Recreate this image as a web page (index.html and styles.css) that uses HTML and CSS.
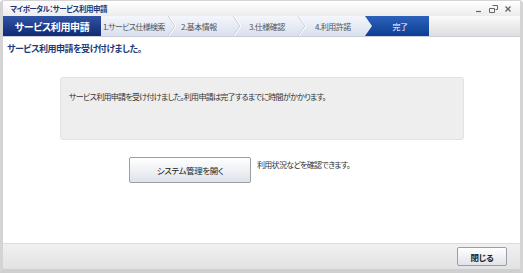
FILE: index.html
```html
<!DOCTYPE html>
<html lang="ja">
<head>
  <meta charset="utf-8">
  <title>マイポータル：サービス利用申請</title>
  <link rel="stylesheet" href="styles.css">
</head>
<body>
  <div class="window">
    <div class="titlebar">
      <span class="title">マイポータル：サービス利用申請</span>
      <div class="winbtns">
        <svg width="8" height="8" viewBox="0 0 8 8"><path d="M1 6.5h5" stroke="#666" stroke-width="1.2"/></svg>
        <svg width="9" height="8" viewBox="0 0 9 8"><path d="M3.5 0.5h5v4h-2M0.5 3.5h5v4h-5z" stroke="#666" fill="none" stroke-width="1"/></svg>
        <svg width="8" height="8" viewBox="0 0 8 8"><path d="M1.5 1.5l5 5M6.5 1.5l-5 5" stroke="#666" stroke-width="1.3"/></svg>
      </div>
    </div>
    <div class="steps">
      <div class="tab">サービス利用申請</div>
      <div class="step s1">1.サービス仕様検索</div>
      <svg class="sep" width="8" height="20" viewBox="0 0 8 20"><polyline points="0,0 7,10 0,20" fill="none" stroke="#c3cbdb"/><polyline points="1,0 8,10 1,20" fill="none" stroke="#fff"/></svg>
      <div class="step s2">2.基本情報</div>
      <svg class="sep" width="8" height="20" viewBox="0 0 8 20"><polyline points="0,0 7,10 0,20" fill="none" stroke="#c3cbdb"/><polyline points="1,0 8,10 1,20" fill="none" stroke="#fff"/></svg>
      <div class="step s3">3.仕様確認</div>
      <svg class="sep" width="8" height="20" viewBox="0 0 8 20"><polyline points="0,0 7,10 0,20" fill="none" stroke="#c3cbdb"/><polyline points="1,0 8,10 1,20" fill="none" stroke="#fff"/></svg>
      <div class="step s4">4.利用許諾</div>
      <div class="step active">完了</div>
      <div class="rest"></div>
    </div>
    <div class="content">
      <div class="heading">サービス利用申請を受け付けました。</div>
      <div class="notice">サービス利用申請を受け付けました。利用申請は完了するまでに時間がかかります。</div>
      <div class="action">
        <button class="btn big">システム管理を開く</button>
        <span class="hint">利用状況などを確認できます。</span>
      </div>
    </div>
    <div class="footer">
      <button class="btn close">閉じる</button>
    </div>
  </div>
</body>
</html>
```

FILE: styles.css
```css
html, body {
  margin: 0;
  padding: 0;
  background: #fff;
}
body {
  font-family: "Noto Sans CJK JP", "Noto Sans", sans-serif;
  font-feature-settings: "palt";
  font-size: 8px;
  color: #333;
}
.window {
  width: 523px;
  height: 273px;
  box-sizing: border-box;
  display: flex;
  flex-direction: column;
  border-left: 3px solid #d4d4d4;
  border-right: 3px solid #d4d4d4;
  border-bottom: 4px solid #cfcfcf;
  border-top: 1px solid #d4d4d4;
  border-radius: 4px 4px 0 0;
  box-shadow: inset 1px 0 0 #b8b8b8, inset -1px 0 0 #b8b8b8;
}
.titlebar {
  height: 15px;
  display: flex;
  align-items: center;
  justify-content: space-between;
  padding: 0 8px 0 7px;
  background: linear-gradient(#ffffff, #ececec);
}
.title {
  font-weight: bold;
  color: #1d3a78;
  font-size: 7.5px;
  letter-spacing: -0.5px;
}
.winbtns {
  display: flex;
  gap: 6px;
  align-items: center;
}
.steps {
  height: 20px;
  display: flex;
  background: linear-gradient(#f4f6fb, #d9e0ee);
  border-bottom: 1px solid #c9ced8;
}
.tab {
  width: 98px;
  flex-shrink: 0;
  display: flex;
  align-items: center;
  justify-content: center;
  color: #fff;
  font-weight: bold;
  font-size: 10px;
  letter-spacing: -0.4px;
  background: linear-gradient(#3154a6, #0f2b72);
}
.step {
  display: flex;
  align-items: center;
  flex-shrink: 0;
  white-space: nowrap;
  color: #555;
  font-size: 8px;
  letter-spacing: -0.5px;
}
.sep {
  flex-shrink: 0;
}
.s1 { width: 65px; padding-left: 2px; letter-spacing: -0.7px; }
.s2 { width: 52px; padding-left: 5px; }
.s3 { width: 49px; padding-left: 8px; }
.s4 { width: 50px; padding-left: 9px; }
.active {
  width: 64px;
  justify-content: center;
  padding-left: 6px;
  box-sizing: border-box;
  color: #fff;
  background: linear-gradient(#2d62bd, #0c3e92);
  clip-path: polygon(0 0, 100% 0, 100% 100%, 0 100%, 7px 50%);
}
.rest {
  flex: 1;
  background: linear-gradient(#fbfbfb, #dedede);
}
.content {
  flex: 1;
  background: #fff;
  padding: 5px 0 0 4px;
}
.heading {
  font-weight: bold;
  color: #1d3a78;
  font-size: 9px;
  letter-spacing: -0.5px;
}
.notice {
  margin: 22px 0 0 53px;
  width: 386px;
  height: 48px;
  padding: 13px 8px 0;
  background: #eeeeee;
  border: 1px solid #e2e2e2;
  border-radius: 3px;
  letter-spacing: -0.7px;
}
.action {
  display: flex;
  align-items: flex-start;
  margin: 17px 0 0 122px;
  gap: 6px;
}
.btn {
  font-family: inherit;
  font-feature-settings: "palt";
  font-size: 8.5px;
  letter-spacing: -0.4px;
  color: #222;
  background: linear-gradient(#ffffff, #dfe3ea);
  border: 1px solid #9a9ea6;
  border-radius: 2px;
  padding: 0;
}
.big {
  width: 122px;
  height: 26px;
}
.hint {
  margin-top: 2px;
  letter-spacing: -0.7px;
}
.footer {
  height: 25px;
  display: flex;
  align-items: center;
  justify-content: flex-end;
  padding-right: 13px;
  border-top: 1px solid #dcdcdc;
  background: linear-gradient(#f0f0f0, #e2e2e2);
}
.close {
  width: 50px;
  height: 19px;
  font-weight: bold;
}
```
